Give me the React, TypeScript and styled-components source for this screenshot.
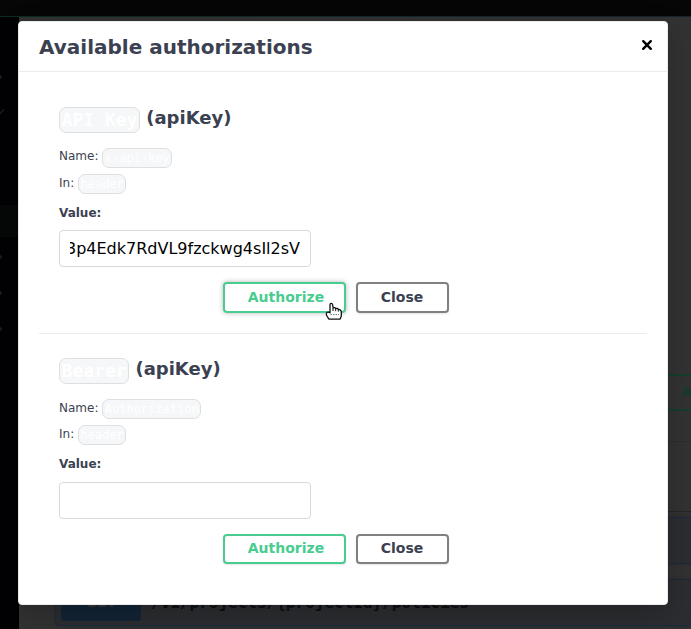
import React from "react";
import styled, { createGlobalStyle, css } from "styled-components";

const GlobalStyle = createGlobalStyle`
  *, *::before, *::after { box-sizing: border-box; }
  html, body { margin: 0; height: 100%; overflow: hidden; background: #323232; }
  body { font-family: "DejaVu Sans", sans-serif; color: #3b4151; }
`;

const Page = styled.div`
  display: flex;
  flex-direction: column;
  height: 629px;
  width: 691px;
  overflow: hidden;
`;

const TopBar = styled.div`
  flex: none;
  height: 16px;
  background: #060607;
`;

const AccentLine = styled.div`
  flex: none;
  height: 1px;
  background: linear-gradient(90deg, #0b2a20, #132a2c 50%, #152330);
`;

const Columns = styled.div`
  display: flex;
  flex: 1;
  min-height: 0;
`;

const SideBar = styled.div`
  flex: none;
  width: 19px;
  background: #020204;
  display: flex;
  flex-direction: column;
`;

const SideItem = styled.div<{ $height: number; $active?: boolean }>`
  flex: none;
  height: ${(p) => p.$height}px;
  display: flex;
  align-items: center;
  background: ${(p) => (p.$active ? "#060707" : "transparent")};
`;

const Content = styled.div`
  flex: 1;
  min-width: 0;
  display: flex;
  flex-direction: column;
  background: #323232;
`;

const AuthBar = styled.div`
  flex: none;
  margin-top: 357px;
  display: flex;
  justify-content: flex-end;
  height: 68px;
  border-bottom: 1px solid #2c2c2c;
`;

const PageAuthorize = styled.div`
  flex: none;
  width: 128px;
  height: 37px;
  margin-right: -92px;
  padding-left: 24px;
  border: 2px solid #153d2b;
  border-radius: 4px;
  font-size: 14px;
  line-height: 33px;
  font-weight: 700;
  color: #153d2b;
`;

const TagLine = styled.div`
  flex: none;
  height: 70px;
  margin-bottom: 5px;
  border-bottom: 1px solid #242527;
`;

const Operation = styled.div`
  flex: none;
  height: 47px;
  margin: 0 -10px 15px 36px;
  padding: 5px;
  display: flex;
  align-items: center;
  border: 1px solid #1c2a3c;
  border-radius: 4px;
  background: #2b2d30;
  box-shadow: 0 0 3px rgba(0, 0, 0, 0.19);
`;

const Method = styled.div`
  width: 80px;
  height: 36px;
  border-radius: 3px;
  background: #132435;
  color: #333536;
  font-size: 14px;
  font-weight: 700;
  line-height: 35px;
  text-align: center;
`;

const Path = styled.div`
  padding-left: 10px;
  font: 700 16px/20px "DejaVu Sans Mono", monospace;
  color: #0c0d10;
`;

const Modal = styled.div`
  position: absolute;
  left: 18px;
  top: 21px;
  width: 650px;
  height: 584px;
  display: flex;
  flex-direction: column;
  background: #fff;
  border: 1px solid #ebebeb;
  border-radius: 4px;
  box-shadow: 0 10px 30px rgba(0, 0, 0, 0.2);
`;

const ModalHeader = styled.div`
  flex: none;
  height: 50px;
  padding: 0 14px 0 20px;
  display: flex;
  align-items: center;
  justify-content: space-between;
  border-bottom: 1px solid #ebebeb;
`;

const Title = styled.h3`
  margin: 0;
  font-size: 20px;
  line-height: 24px;
  font-weight: 700;
`;

const Dismiss = styled.svg`
  display: block;
  width: 12px;
  height: 12px;
  margin-top: -3px;
`;

const ModalBody = styled.div`
  padding: 10px 20px 0;
`;

const Divider = styled.hr`
  height: 1px;
  margin: 0;
  border: 0;
  background: #ebebeb;
`;

const AuthSection = styled.section<{ $compact?: boolean }>`
  height: 251px;
  padding: ${(p) => (p.$compact ? 24 : 25)}px 20px 0;
`;

const SchemeTitle = styled.h4`
  margin: 0;
  height: 26px;
  display: flex;
  align-items: flex-start;
  gap: 6px;
  font-size: 18px;
  line-height: 22px;
  font-weight: 700;
`;

const SchemeCode = styled.code`
  height: 26px;
  padding: 0 1.7px;
  border: 1px solid #dddfe1;
  border-radius: 7px;
  background: #f5f7f9;
  color: #fff;
  font: 700 18px/23px "DejaVu Sans Mono", monospace;
`;

const Details = styled.div`
  display: flex;
  flex-direction: column;
  gap: 6px;
  margin-top: 15px;
`;

const Detail = styled.div<{ $textHeight: number }>`
  display: flex;
  align-items: flex-start;
  gap: 4px;
  height: 20px;
  font-size: 12px;
  line-height: ${(p) => p.$textHeight}px;
`;

const DetailCode = styled.code`
  height: 20px;
  padding: 0 1.3px;
  border: 1px solid #dddfe1;
  border-radius: 7px;
  background: #f5f7f9;
  color: #fff;
  font: 400 12px/18px "DejaVu Sans Mono", monospace;
`;

const Label = styled.div`
  margin-top: 11px;
  height: 16px;
  font-size: 12px;
  line-height: 16px;
  font-weight: 700;
`;

const Field = styled.div<{ $gap: number }>`
  margin-top: ${(p) => p.$gap}px;
  width: 252px;
  height: 37px;
  padding: 0 10px;
  border: 1px solid #d9d9d9;
  border-radius: 4px;
`;

const FieldText = styled.div`
  display: flex;
  justify-content: flex-end;
  overflow: hidden;
  font-size: 16px;
  line-height: 35px;
  white-space: nowrap;
  color: #000;
`;

const Actions = styled.div<{ $height: number }>`
  display: flex;
  justify-content: center;
  gap: 10px;
  height: ${(p) => p.$height}px;
  margin: 15px 15px 0 0;
`;

const Button = styled.button<{ $kind: "authorize" | "close"; $hover?: boolean }>`
  position: relative;
  width: ${(p) => (p.$kind === "authorize" ? 123 : 93)}px;
  padding: 0 0 2px ${(p) => (p.$kind === "authorize" ? 4 : 0)}px;
  border: 2px solid ${(p) => (p.$kind === "authorize" ? "#49cc90" : "#808080")};
  border-radius: 4px;
  background: #fff;
  color: ${(p) => (p.$kind === "authorize" ? "#49cc90" : "#3b4151")};
  font: 700 14px/16px "DejaVu Sans", sans-serif;
  box-shadow: 0 1px 2px rgba(0, 0, 0, 0.1);
  ${(p) =>
    p.$hover &&
    css`
      box-shadow: 0 0 5px rgba(0, 0, 0, 0.3);
    `}
`;

const Pointer = styled.svg`
  position: absolute;
  left: 100px;
  top: 18px;
  width: 18px;
  height: 19px;
`;

function HandPointer() {
  return (
    <Pointer viewBox="0 0 18 19" aria-hidden="true">
      <path
        d="M5 10.8V2.8C5 .8 7.4.8 7.6 2.8L8.2 6C9 5.2 10.4 5.5 10.7 6.6C11.7 6 13 6.4 13.3 7.5C14.8 7.1 16.3 8.3 16.3 10V14.2L15 17.2H4L2.6 15.2C1.4 13.6 1 12.4 1.4 11.2C1.8 9.9 3.6 9.9 5 10.8Z"
        fill="#fff"
        stroke="#111"
        strokeWidth="1.3"
        strokeLinejoin="round"
      />
      <path d="M8 6V9M10.7 6.6V9.2M13.3 7.5V9.6" stroke="#111" strokeWidth="1" />
      <path d="M5.5 12.6H14" stroke="#777" strokeWidth="1" strokeDasharray="1.5 1" />
    </Pointer>
  );
}

function Chevron({ wide }: { wide?: boolean }) {
  return (
    <svg width="5" height="8" viewBox="0 0 5 8" aria-hidden="true">
      <path
        d={wide ? "M-1 6.5L4 1.5" : "M-1 1.5L1.3 4L-1 6.5"}
        fill="none"
        stroke="#1d1e20"
        strokeWidth="1.5"
      />
    </svg>
  );
}

interface SchemeProps {
  scheme: string;
  name: string;
  value: string;
  hovered?: boolean;
  compact?: boolean;
}

function Scheme({ scheme, name, value, hovered, compact }: SchemeProps) {
  return (
    <AuthSection $compact={compact}>
      <SchemeTitle>
        <SchemeCode>{scheme}</SchemeCode>
        <span>(apiKey)</span>
      </SchemeTitle>
      <Details>
        <Detail $textHeight={compact ? 19 : 17}>
          <span>Name:</span>
          <DetailCode>{name}</DetailCode>
        </Detail>
        <Detail $textHeight={19}>
          <span>In:</span>
          <DetailCode>header</DetailCode>
        </Detail>
      </Details>
      <Label>Value:</Label>
      <Field $gap={compact ? 10 : 9}>
        <FieldText>{value}</FieldText>
      </Field>
      <Actions $height={compact ? 30 : 31}>
        <Button $kind="authorize" $hover={hovered}>
          Authorize
          {hovered && <HandPointer />}
        </Button>
        <Button $kind="close">Close</Button>
      </Actions>
    </AuthSection>
  );
}

export default function App() {
  return (
    <>
      <GlobalStyle />
      <Page>
        <TopBar />
        <AccentLine />
        <Columns>
          <SideBar>
            <SideItem $height={42} />
            <SideItem $height={36}><Chevron /></SideItem>
            <SideItem $height={34}><Chevron wide /></SideItem>
            <SideItem $height={76} />
            <SideItem $height={32} $active />
            <SideItem $height={39}><Chevron /></SideItem>
            <SideItem $height={33}><Chevron /></SideItem>
            <SideItem $height={39}><Chevron /></SideItem>
          </SideBar>
          <Content>
            <AuthBar>
              <PageAuthorize>Authorize</PageAuthorize>
            </AuthBar>
            <TagLine />
            <Operation />
            <Operation>
              <Method>GET</Method>
              <Path>/v1/projects/{"{projectId}"}/policies</Path>
            </Operation>
          </Content>
        </Columns>
      </Page>
      <Modal role="dialog">
        <ModalHeader>
          <Title>Available authorizations</Title>
          <Dismiss viewBox="0 0 12 12" aria-label="Close dialog">
            <path d="M2.2 2.2L9.8 9.8M9.8 2.2L2.2 9.8" stroke="#000" strokeWidth="2.4" strokeLinecap="round" />
          </Dismiss>
        </ModalHeader>
        <ModalBody>
          <Scheme scheme="API Key" name="x-api-key" value="3p4Edk7RdVL9fzckwg4sIl2sV" hovered />
          <Divider />
          <Scheme scheme="Bearer" name="Authorization" value="" compact />
        </ModalBody>
      </Modal>
    </>
  );
}
